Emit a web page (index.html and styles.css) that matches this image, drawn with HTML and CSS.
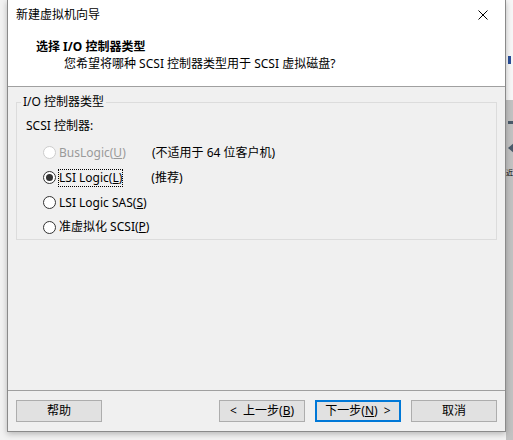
FILE: index.html
```html
<!DOCTYPE html>
<html lang="zh-CN">
<head>
<meta charset="utf-8">
<link rel="stylesheet" href="styles.css">
</head>
<body>
<div class="desk">
  <div class="left-strip"></div>
  <div class="window">
    <div class="titlebar">
      <span class="title">新建虚拟机向导</span>
      <span class="close">
        <svg width="10" height="10" viewBox="0 0 10 10"><path d="M0.5 0.5 L9.5 9.5 M9.5 0.5 L0.5 9.5" stroke="#000" stroke-width="1" fill="none"/></svg>
      </span>
    </div>
    <div class="header">
      <div class="h-title">选择 I/O 控制器类型</div>
      <div class="h-sub">您希望将哪种 SCSI 控制器类型用于 SCSI 虚拟磁盘?</div>
    </div>
    <div class="body">
      <fieldset class="group">
        <legend>I/O 控制器类型</legend>
        <div class="caption">SCSI 控制器:</div>
        <div class="row r1 disabled">
          <span class="radio"></span>
          <span class="label">BusLogic(<u>U</u>)</span>
          <span class="note">(不适用于 64 位客户机)</span>
        </div>
        <div class="row r2">
          <span class="radio checked"></span>
          <span class="label focus">LSI Logic(<u>L</u>)</span>
          <span class="note">(推荐)</span>
        </div>
        <div class="row r3">
          <span class="radio"></span>
          <span class="label">LSI Logic SAS(<u>S</u>)</span>
        </div>
        <div class="row r4">
          <span class="radio"></span>
          <span class="label">准虚拟化 SCSI(<u>P</u>)</span>
        </div>
      </fieldset>
    </div>
    <div class="footer">
      <button class="btn">帮助</button>
      <div class="spacer"></div>
      <button class="btn">&lt;&nbsp; 上一步(<u>B</u>)</button>
      <button class="btn default">下一步(<u>N</u>)&nbsp; &gt;</button>
      <button class="btn">取消</button>
    </div>
  </div>
  <div class="right-strip">
    <div class="rs-top"><span class="rs-glyph"></span></div>
    <div class="rs-bottom">
      <span class="rs-bar"></span>
      <span class="rs-arrow"></span>
      <span class="rs-char">近</span>
    </div>
  </div>
</div>
</body>
</html>
```

FILE: styles.css
```css
html, body {
  margin: 0;
  padding: 0;
}
body {
  width: 513px;
  height: 440px;
  overflow: hidden;
  background: #f2f2f2;
  font-family: "Noto Sans", "Noto Sans CJK SC", sans-serif;
  font-size: 12px;
  color: #000;
}
.desk {
  display: flex;
  height: 440px;
}
.left-strip {
  width: 7px;
  flex: none;
  background: #f2f2f2;
}
.window {
  width: 497px;
  height: 431px;
  flex: none;
  border: 1px solid #8a8a8a;
  border-top: none;
  background: #f0f0f0;
  display: flex;
  flex-direction: column;
  box-shadow: 0 2px 6px rgba(0,0,0,0.25);
  position: relative;
  z-index: 1;
}
.titlebar {
  height: 30px;
  background: #fff;
  display: flex;
  align-items: center;
  padding-left: 8px;
  flex: none;
}
.title {
  flex: 1;
  line-height: 16px;
  color: #000;
}
.close {
  width: 46px;
  height: 30px;
  display: flex;
  align-items: center;
  justify-content: center;
  margin-right: -1px;
}
.header {
  background: #fff;
  height: 57px;
  border-bottom: 1px solid #a0a0a0;
  padding-top: 9px;
  box-sizing: border-box;
  flex: none;
}
.h-title {
  font-weight: bold;
  line-height: 16px;
  padding-left: 28px;
}
.h-sub {
  line-height: 16px;
  padding-left: 56px;
  margin-top: 1px;
}
.body {
  height: 304px;
  flex: none;
  padding: 7px 8px 0;
  box-sizing: border-box;
  border-bottom: 1px solid #a0a0a0;
}
.group {
  margin: 0;
  border: 1px solid #dcdcdc;
  padding: 0 8px 0 9px;
  min-width: 0;
}
.group legend {
  padding: 0 2px;
  margin-left: -5px;
  line-height: 16px;
}
.caption {
  line-height: 16px;
  margin-top: 8px;
  margin-bottom: 6px;
}
.row {
  display: flex;
  align-items: center;
  padding-left: 17px;
  height: 25px;
}
.row.r4 {
  height: 24px;
}
.radio {
  width: 11px;
  height: 11px;
  border: 1px solid #333;
  border-radius: 50%;
  background: #fff;
  flex: none;
  position: relative;
}
.radio.checked::after {
  content: "";
  position: absolute;
  left: 2px;
  top: 2px;
  width: 7px;
  height: 7px;
  border-radius: 50%;
  background: #333;
}
.disabled .radio {
  border-color: #cccccc;
  background: #fff;
}
.label {
  margin-left: 3px;
  width: 93px;
  line-height: 16px;
  white-space: nowrap;
}
.label.focus {
  width: auto;
  outline: 1px dotted #000;
  outline-offset: 0;
  margin-right: 29px;
}
.disabled .label {
  color: #9a9a9a;
}
.note {
  line-height: 16px;
}
.footer {
  flex: 1;
  display: flex;
  align-items: flex-start;
  padding: 9px 8px 0;
  gap: 10px;
}
.spacer {
  flex: 1;
}
.btn {
  width: 86px;
  height: 22px;
  border: 1px solid #adadad;
  background: #e1e1e1;
  font-family: "Noto Sans", "Noto Sans CJK SC", sans-serif;
  font-size: 12px;
  color: #000;
  padding: 0;
  line-height: 18px;
  box-sizing: border-box;
  white-space: nowrap;
}
.btn.default {
  border: 2px solid #0078d7;
}
.right-strip {
  flex: 1;
  display: flex;
  flex-direction: column;
  overflow: hidden;
}
.rs-top {
  height: 100px;
  background: #f7f7f7;
  position: relative;
}
.rs-glyph {
  position: absolute;
  left: 2px;
  top: 56px;
  width: 3px;
  height: 8px;
  background: #2a4f9a;
}
.rs-bottom {
  flex: 1;
  background: #c2c2c2;
  position: relative;
}
.rs-bar {
  position: absolute;
  left: 2px;
  top: 21px;
  width: 6px;
  height: 3px;
  background: #4a5a6a;
}
.rs-arrow {
  position: absolute;
  left: 2px;
  top: 43px;
  width: 0;
  height: 0;
  border-top: 5px solid transparent;
  border-bottom: 5px solid transparent;
  border-right: 6px solid #4a5a6a;
}
.rs-char {
  position: absolute;
  left: 0;
  top: 68px;
  font-size: 7px;
  line-height: 10px;
  color: #000;
}
```
